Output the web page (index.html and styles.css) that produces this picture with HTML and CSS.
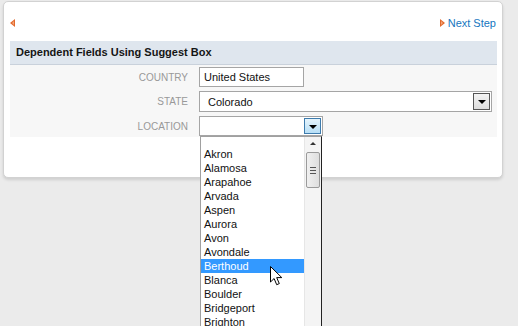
FILE: index.html
```html
<!DOCTYPE html>
<html lang="en">
<head>
    <meta charset="UTF-8">
    <title>Dependent Fields Using Suggest Box</title>
    <link rel="stylesheet" href="styles.css">
</head>
<body>
    <div class="panel">
        <div class="nav">
            <a class="prev" href="#">
                <svg width="6" height="8" viewBox="0 0 6 8"><path d="M5 0v8L0 4z" fill="#e2692c"/><path d="M4 2v4L2 4z" fill="#f4a57a"/></svg>
            </a>
            <a class="next" href="#">
                <svg width="6" height="8" viewBox="0 0 6 8"><path d="M1 0v8L6 4z" fill="#e2692c"/><path d="M2 2v4L4 4z" fill="#f4a57a"/></svg>
                Next Step
            </a>
        </div>
        <div class="section-head">Dependent Fields Using Suggest Box</div>
        <div class="form">
            <div class="row">
                <label>COUNTRY</label>
                <div class="text-input">United States</div>
            </div>
            <div class="row">
                <label>STATE</label>
                <div class="select">
                    <span>Colorado</span>
                    <span class="drop-btn"><i></i></span>
                </div>
            </div>
            <div class="row">
                <label>LOCATION</label>
                <div class="combo">
                    <span></span>
                    <span class="drop-btn active"><i></i></span>
                    <div class="list">
                        <ul class="options">
                            <li>Akron</li>
                            <li>Alamosa</li>
                            <li>Arapahoe</li>
                            <li>Arvada</li>
                            <li>Aspen</li>
                            <li>Aurora</li>
                            <li>Avon</li>
                            <li>Avondale</li>
                            <li class="hover">Berthoud</li>
                            <li>Blanca</li>
                            <li>Boulder</li>
                            <li>Bridgeport</li>
                            <li>Brighton</li>
                        </ul>
                        <div class="scrollbar">
                            <div class="arrow-up"></div>
                            <div class="thumb"><b></b><b></b><b></b></div>
                        </div>
                        <svg class="cursor" width="13" height="20" viewBox="0 0 13 20">
                            <path d="M0.5 0.5v15.5l3.6-3.5 2.6 6.2 2.6-1.1-2.6-6h5.1z" fill="#fff" stroke="#000" stroke-width="1"/>
                        </svg>
                    </div>
                </div>
            </div>
        </div>
    </div>
</body>
</html>
```

FILE: styles.css
```css
body {
    margin: 0;
    padding: 1px 0 0 3px;
    background: #ebebeb;
    font-family: "Liberation Sans", Arial, sans-serif;
    font-size: 11px;
    color: #111;
    height: 325px;
    overflow: hidden;
}
.panel {
    width: 500px;
    box-sizing: border-box;
    background: #fff;
    border: 1px solid #d2d2d2;
    border-radius: 5px;
    box-shadow: 0 2px 3px rgba(0, 0, 0, 0.12);
    padding: 0 5px 40px 6px;
}
.nav {
    height: 39px;
    display: flex;
    align-items: center;
    justify-content: space-between;
    padding-top: 2px;
    box-sizing: border-box;
}
.nav a {
    text-decoration: none;
    color: #1676c0;
    display: flex;
    align-items: center;
    gap: 3px;
}
.nav svg { display: block; }
.nav .next { margin-right: 1px; }
.section-head {
    height: 23px;
    line-height: 23px;
    background: #dfe6ee;
    border-bottom: 1px solid #c9d1db;
    padding-left: 6px;
    font-weight: bold;
    font-size: 11px;
    color: #151515;
}
.form {
    background: #f7f7f7;
    padding: 2px 0 1px;
    display: flex;
    flex-direction: column;
    gap: 4px;
}
.row {
    display: flex;
    align-items: center;
}
.row label {
    width: 178px;
    text-align: right;
    color: #999;
    font-size: 10px;
    margin-right: 11px;
}
.text-input {
    width: 105px;
    height: 20px;
    box-sizing: border-box;
    border: 1px solid #a5a5a5;
    background: #fff;
    padding-left: 4px;
    line-height: 18px;
}
.select, .combo {
    height: 21px;
    box-sizing: border-box;
    border: 1px solid #a5a5a5;
    background: #fff;
    display: flex;
    align-items: center;
    justify-content: space-between;
    padding: 0 1px 0 8px;
}
.select { width: 293px; }
.combo {
    width: 124px;
    height: 20px;
    position: relative;
    padding-right: 1px;
}
.drop-btn {
    width: 17px;
    height: 17px;
    box-sizing: border-box;
    border: 1px solid #555;
    background: linear-gradient(#f4f4f4, #dcdcdc);
    display: flex;
    align-items: center;
    justify-content: center;
}
.drop-btn.active {
    border-color: #3d7bad;
    background: linear-gradient(#e5f4fc, #b7dff6);
    height: 16px;
}
.drop-btn i {
    width: 0;
    height: 0;
    border-left: 4px solid transparent;
    border-right: 4px solid transparent;
    border-top: 4px solid #000;
    margin-top: 1px;
}
.list {
    position: absolute;
    left: 0;
    top: 19px;
    width: 122px;
    height: 200px;
    box-sizing: border-box;
    background: #fff;
    border: 1px solid #a0a0a0;
    border-right-color: #222;
    display: flex;
}
.options {
    list-style: none;
    margin: 0;
    padding: 10px 0 0;
    flex: 1;
}
.options li {
    height: 14px;
    line-height: 14px;
    padding-left: 3px;
}
.options li.hover {
    background: #3399ff;
    color: #fff;
}
.scrollbar {
    width: 16px;
    background: #f4f4f4;
    border-left: 1px solid #e6e6e6;
}
.arrow-up {
    width: 0;
    height: 0;
    margin: 5px auto 0;
    border-left: 3px solid transparent;
    border-right: 3px solid transparent;
    border-bottom: 3px solid #333;
}
.thumb {
    margin: 7px 1px 0;
    height: 34px;
    border: 1px solid #9a9a9a;
    border-radius: 2px;
    background: linear-gradient(90deg, #f0f0f0, #dedede);
    display: flex;
    flex-direction: column;
    align-items: center;
    justify-content: center;
    gap: 2px;
}
.thumb b {
    width: 6px;
    height: 1px;
    background: #555;
}
.cursor {
    position: absolute;
    left: 69px;
    top: 129px;
}
```
